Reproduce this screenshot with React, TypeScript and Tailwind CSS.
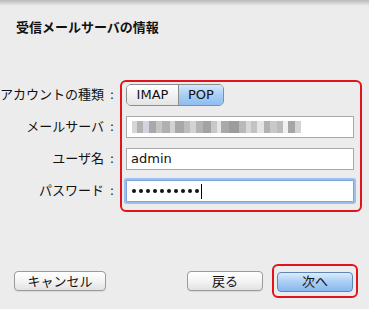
import React from 'react';

const jp = '"Lucida Grande", "DejaVu Sans", "Noto Sans CJK JP", sans-serif';

// pixelated placeholder standing in for the blurred server address
const blur = [
  ['#d6d6d6', 5], ['#b3b3b3', 6], ['#d0d6dc', 6], ['#a9a9a9', 7], ['#c6c6c6', 6],
  ['#b0b0b0', 8], ['#d2d2d2', 5], ['#a8a8a8', 9], ['#bdbdbd', 6], ['#d3d3d3', 6],
  ['#b4b4b4', 7], ['#a3a3a3', 8], ['#c8c8c8', 6], ['#e6e6e6', 4], ['#a9a9a9', 8],
  ['#9c9c9c', 10], ['#b9b9b9', 7], ['#d8d8d8', 5], ['#c3c3c3', 6], ['#e4e4e4', 7],
  ['#b2b2b2', 6], ['#c9c9c9', 7], ['#bcbcbc', 6], ['#f0f0f0', 5], ['#a6a6a6', 7],
  ['#d4d4d4', 6],
] as const;

const Label: React.FC<{ children: React.ReactNode }> = ({ children }) => (
  <div className="h-[22px] flex items-center justify-end whitespace-nowrap text-[13px] text-[#111]">
    {children}
    <span className="ml-[4px] w-[8px] text-center">:</span>
  </div>
);

const PlainButton: React.FC<{ children: React.ReactNode; className?: string }> = ({ children, className = '' }) => (
  <button
    className={`h-[20px] rounded-[4px] border border-[#9b9b9b] bg-gradient-to-b from-[#ffffff] via-[#f4f4f4] to-[#e2e2e2] text-[13px] leading-none text-[#111] shadow-[0_1px_0_rgba(0,0,0,0.08)] ${className}`}
  >
    {children}
  </button>
);

export default function App() {
  return (
    <div className="w-[369px] h-[309px] bg-[#ececec] flex flex-col overflow-hidden" style={{ fontFamily: jp }}>
      <div className="h-[6px] bg-gradient-to-b from-[#b9b9b9] to-[#ececec]" />

      <div className="pl-[16px] pt-[13px] h-[35px] text-[13px] font-bold text-[#111] leading-[18px]">
        受信メールサーバの情報
      </div>

      <div className="mt-[39px] flex">
        <div className="w-[120px] pt-[4px] pr-[4px] flex flex-col gap-[10px]">
          <Label>アカウントの種類</Label>
          <Label>メールサーバ</Label>
          <Label>ユーザ名</Label>
          <Label>パスワード</Label>
        </div>

        <div className="w-[242px] h-[132px] border-2 border-[#e2141b] rounded-[6px] pl-[4px] pr-[6px] pt-[2px] flex flex-col gap-[10px]">
          <div className="h-[22px] w-[98px] flex rounded-[5px] border border-[#8d8d8d] overflow-hidden text-[13px] text-[#111]">
            <div className="w-[52px] flex items-center justify-center bg-gradient-to-b from-[#ffffff] to-[#e4e4e4] border-r border-[#8d8d8d]">
              IMAP
            </div>
            <div className="flex-1 flex items-center justify-center bg-gradient-to-b from-[#d5e8fb] via-[#a9cef4] to-[#8fbdef]">
              POP
            </div>
          </div>

          <div className="h-[22px] w-[228px] border border-[#a9a9a9] bg-white flex items-center pl-[5px]">
            <div className="flex h-[12px]">
              {blur.map(([c, w], i) => (
                <div key={i} className="h-full" style={{ backgroundColor: c, width: w }} />
              ))}
            </div>
          </div>

          <div className="h-[22px] w-[228px] border border-[#a9a9a9] bg-white flex items-center pl-[4px] text-[13px] text-[#111]">
            admin
          </div>

          <div className="h-[22px] w-[228px] border border-[#7aa6dc] bg-white flex items-center pl-[5px] shadow-[0_0_0_2px_#9cc0ea] rounded-[1px]">
            <div className="flex gap-[3px]">
              {Array.from({ length: 10 }).map((_, i) => (
                <span key={i} className="w-[4px] h-[4px] rounded-full bg-[#111]" />
              ))}
            </div>
            <span className="w-[1px] h-[15px] bg-black ml-[2px]" />
          </div>
        </div>
      </div>

      <div className="mt-[52px] flex items-center">
        <PlainButton className="ml-[14px] w-[92px]">キャンセル</PlainButton>
        <PlainButton className="ml-[81px] w-[76px]">戻る</PlainButton>
        <div className="ml-[9px] p-[3px] border-2 border-[#e2141b] rounded-[6px]">
          <button className="h-[20px] w-[76px] rounded-[4px] border border-[#5f84b8] bg-gradient-to-b from-[#dcecfc] via-[#a8cdf4] to-[#88b8ee] text-[13px] leading-none text-[#111]">
            次へ
          </button>
        </div>
      </div>
    </div>
  );
}
